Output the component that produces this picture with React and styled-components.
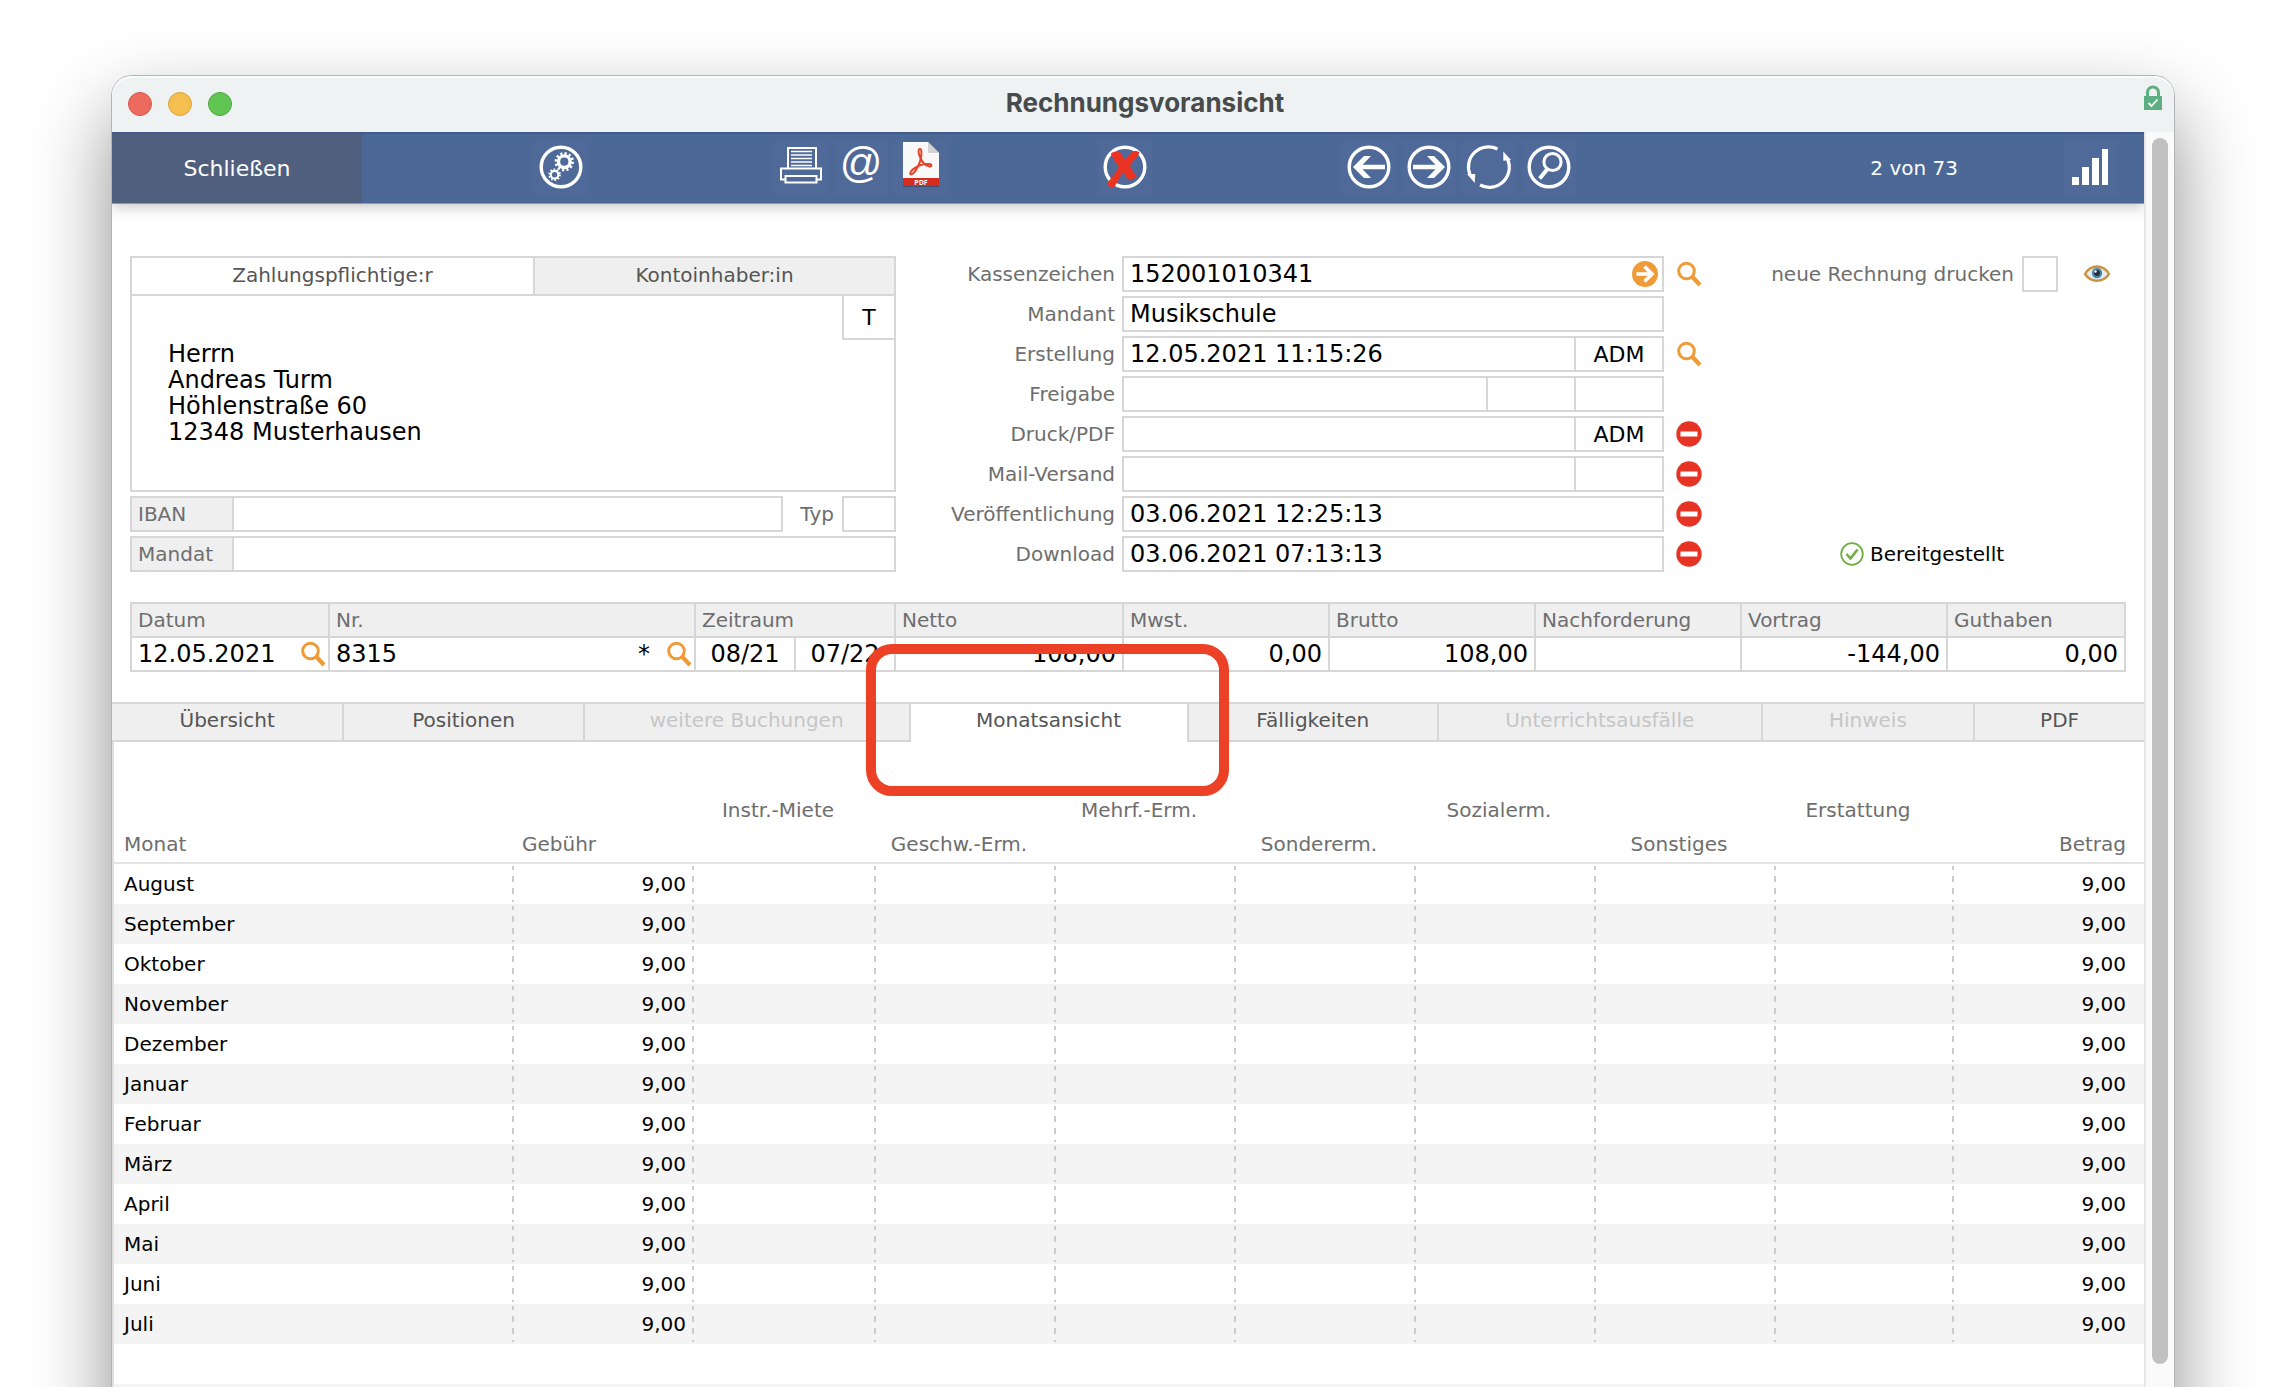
import React from 'react';
import styled, { createGlobalStyle, css } from 'styled-components';

const line = '#d6d6d6';
const orange = '#ef9c38';

const GlobalStyle = createGlobalStyle`
  * {
    box-sizing: border-box;
  }
  body {
    margin: 0;
    background: #fff;
    font-family: 'DejaVu Sans', Verdana, sans-serif;
    font-size: 20px;
    color: #000;
  }
  button, input, textarea {
    margin: 0;
    padding: 0;
    border: 0;
    border-radius: 0;
    background: none;
    font: inherit;
    color: inherit;
    outline: none;
  }
  svg {
    display: block;
    overflow: visible;
  }
`;

const Page = styled.div`
  height: 100vh;
  padding: 76px 112px 0;
  overflow: hidden;
`;

const Window = styled.main`
  display: flex;
  flex-direction: column;
  height: 100vh;
  border-radius: 20px 20px 0 0;
  background: #fff;
  box-shadow: 0 0 0 1px #b4b4b4, 0 36px 80px rgba(0, 0, 0, 0.45);
`;

const TitleBar = styled.header`
  display: grid;
  grid-template-columns: 1fr auto 1fr;
  align-items: center;
  height: 56px;
  flex: none;
  padding: 0 12px 0 16px;
  border-radius: 20px 20px 0 0;
  background: #eef2f3;
  box-shadow: inset 0 2px 0 #fafbfb;
`;

const Lights = styled.div`
  display: flex;
  gap: 16px;
`;

const Light = styled.button`
  width: 24px;
  height: 24px;
  border: 1px solid ${props => props.$edge};
  border-radius: 50%;
  background: ${props => props.$fill};
`;

const Title = styled.h1`
  margin: 0;
  padding-bottom: 2px;
  font: 700 26px/32px Inter, sans-serif;
  color: #484b4b;
`;

const LockSlot = styled.div`
  align-self: start;
  justify-self: end;
  padding-top: 9px;
`;

const Frame = styled.div`
  display: flex;
  flex: 1;
  min-height: 0;
`;

const Content = styled.div`
  flex: 1;
  min-width: 0;
  overflow: hidden;
`;

const ScrollTrack = styled.div`
  display: flex;
  flex: none;
  width: 30px;
  padding: 6px 6px 99px;
  border-left: 2px solid #e6e6e6;
  background: #fafafa;
`;

const ScrollThumb = styled.div`
  width: 16px;
  border-radius: 8px;
  background: #c1c1c1;
`;

const Toolbar = styled.nav`
  display: grid;
  grid-template-columns: 250fr 398fr 202fr 326fr 342fr 328fr 160fr;
  align-items: center;
  height: 72px;
  padding-right: 26px;
  border-top: 2px solid #435b87;
  border-bottom: 1px solid #8797b8;
  background: #4c6897;
  box-shadow: 0 2px 14px rgba(0, 0, 0, 0.25);
  color: #fff;
`;

const CloseButton = styled.button`
  align-self: stretch;
  background: #4f5f7d;
  font-size: 22px;
`;

const ToolGroup = styled.div`
  display: flex;
  justify-content: ${props => props.$align || 'center'};
  gap: 6px;
  padding-bottom: 2px;
`;

const ToolButton = styled.button`
  width: 54px;
  height: 54px;
  background: rgba(255, 255, 255, 0.02);
`;

const Form = styled.form`
  display: grid;
  grid-template-columns: 766fr 810fr 420fr;
  padding: 52px 18px 0;
`;

const Payer = styled.section`
  display: flex;
  flex-direction: column;
  gap: 4px;
`;

const AddressBox = styled.div`
  height: 236px;
  border: 2px solid ${line};
`;

const AddressTabs = styled.div`
  display: grid;
  grid-template-columns: 401fr 361fr;
  height: 38px;
  border-bottom: 2px solid ${line};
`;

const AddressTab = styled.button`
  padding-bottom: 2px;
  color: #555;
  background: ${props => (props.$active ? '#fff' : '#efefef')};
  border-left: ${props => (props.$active ? 0 : `2px solid ${line}`)};
`;

const AddressBody = styled.div`
  display: flex;
  align-items: flex-start;
`;

const Address = styled.textarea`
  flex: 1;
  height: 180px;
  padding: 45px 0 0 36px;
  resize: none;
  overflow: hidden;
  font-size: 24px;
  line-height: 26px;
`;

const TypeButton = styled.button`
  width: 52px;
  height: 44px;
  border: solid ${line};
  border-width: 0 0 2px 2px;
  font-size: 22px;
`;

const BankRow = styled.div`
  display: flex;
  height: 36px;
`;

const BankLabel = styled.label`
  display: flex;
  align-items: center;
  width: 104px;
  padding-left: 6px;
  border: 2px solid ${line};
  background: #efefef;
  color: #6e6e6e;
`;

const BankInput = styled.input`
  flex: 1;
  min-width: 0;
  border: 2px solid ${line};
  border-left: 0;
`;

const TypLabel = styled.label`
  display: flex;
  align-items: center;
  padding: 0 8px 0 17px;
  color: #6e6e6e;
`;

const TypInput = styled.input`
  width: 54px;
  border: 2px solid ${line};
`;

const Fields = styled.section`
  display: flex;
  flex-direction: column;
  gap: 4px;
`;

const FieldRow = styled.div`
  display: grid;
  grid-template-columns: 226fr 542fr 42px;
  align-items: center;
  height: 36px;
`;

const FieldLabel = styled.label`
  padding-right: 7px;
  text-align: right;
  color: #6e6e6e;
`;

const FieldBox = styled.div`
  display: flex;
  align-items: center;
  height: 36px;
  border: 2px solid ${line};
`;

const FieldInput = styled.input`
  height: 32px;
  ${props =>
    props.$small
      ? css`
          flex: none;
          width: 88px;
          border-left: 2px solid ${line};
          font-size: 22px;
          text-align: center;
        `
      : css`
          flex: 1;
          min-width: 0;
          padding-left: 6px;
          font-size: 24px;
        `}
`;

const IconButton = styled.button`
  flex: none;
  width: 26px;
  height: 26px;
  margin-right: ${props => (props.$inset ? '4px' : 0)};
`;

const FieldAction = styled.div`
  display: flex;
  padding-left: 12px;
`;

const Status = styled.section`
  display: flex;
  flex-direction: column;
  justify-content: space-between;
`;

const PrintOption = styled.div`
  display: flex;
  align-items: center;
  justify-content: flex-end;
  height: 36px;
  padding-right: 16px;
  color: #6e6e6e;
`;

const Checkbox = styled.input`
  appearance: none;
  width: 36px;
  height: 36px;
  margin: 0 26px 0 8px;
  border: 2px solid ${line};
`;

const Provided = styled.div`
  display: flex;
  align-items: center;
  gap: 6px;
  height: 36px;
  padding-left: 134px;
`;

const SummaryWrap = styled.div`
  padding: 30px 18px;
`;

const Summary = styled.table`
  width: 100%;
  table-layout: fixed;
  border-collapse: collapse;
  th, td {
    height: 34px;
    padding: 0 6px;
    border: 2px solid ${line};
    line-height: 30px;
  }
  th {
    background: #efefef;
    color: #6e6e6e;
    font-weight: 400;
    text-align: left;
  }
  td {
    font-size: 24px;
    white-space: nowrap;
  }
`;

const Col = styled.col`
  width: ${props => props.$share}%;
`;

const Amount = styled.td`
  text-align: ${props => props.$align || 'right'};
`;

const WithIcon = styled.div`
  display: flex;
  align-items: center;
  justify-content: space-between;
  margin-right: -4px;
`;

const Spring = styled.span`
  flex: 1;
  padding-right: 16px;
  text-align: right;
`;

const Tabs = styled.div`
  display: flex;
  height: 40px;
`;

const Tab = styled.button`
  position: relative;
  flex: ${props => props.$grow} 1 0;
  min-width: 0;
  padding-bottom: 4px;
  border: solid ${line};
  border-width: 2px 2px 2px 0;
  background: #efefef;
  color: #555;
  white-space: nowrap;
  &:disabled {
    color: #c6c6c6;
  }
  &:last-child {
    border-right: 0;
  }
  ${props =>
    props.$active &&
    css`
      border-width: 2px 0 0;
      padding-bottom: 6px;
      background: #fff;
      & + button {
        border-left-width: 2px;
      }
    `}
`;

/* highlight drawn over the active tab and the rows around it */
const Marker = styled.span`
  position: absolute;
  z-index: 2;
  inset: -60px -42px -54px -45px;
  border: 10px solid #ec4126;
  border-radius: 26px;
  pointer-events: none;
`;

const Months = styled.table`
  width: 100%;
  table-layout: fixed;
  border-spacing: 0;
  border-left: 2px solid #e0e0e0;
`;

const HeadCell = styled.th`
  height: 122px;
  padding: ${props => props.$pad || '51px 14px 1px 0'};
  border-bottom: 2px solid #e4e4e4;
  color: #6e6e6e;
  font-weight: 400;
  line-height: 34px;
  white-space: nowrap;
  text-align: ${props => props.$align || 'center'};
  vertical-align: ${props => (props.$upper ? 'top' : 'bottom')};
`;

const MonthRow = styled.tr`
  height: 40px;
  &:nth-child(even) {
    background: #f4f4f4;
  }
`;

const MonthCell = styled.td`
  padding: 0 8px 0 10px;
  text-align: ${props => props.$align || 'left'};
  ${props =>
    props.$dashed &&
    css`
      background: linear-gradient(
          transparent 2px, #ccc 2px, #ccc 6px,
          transparent 6px, transparent 12px, #ccc 12px, #ccc 18px,
          transparent 18px, transparent 24px, #ccc 24px, #ccc 30px,
          transparent 30px, transparent 36px, #ccc 36px, #ccc 38px,
          transparent 38px
        ) right / 2px 40px no-repeat;
    `}
  &:last-child {
    padding-right: 18px;
  }
`;

const Ring = () => (
  <circle cx="27" cy="26" r="19.8" fill="none" stroke="#fff" strokeWidth="3.4" />
);

const ToolIcon = ({ children }) => (
  <svg width="54" height="54" viewBox="0 0 54 54">
    {children}
  </svg>
);

const GearsIcon = () => (
  <ToolIcon>
    <Ring />
    <g fill="none" stroke="#fff">
      <circle cx="30.3" cy="20.7" r="5.8" strokeWidth="3.4" />
      <circle cx="30.3" cy="20.7" r="8.2" strokeWidth="3" strokeDasharray="2.2 2.09" />
      <circle cx="20.6" cy="33.7" r="3.8" strokeWidth="2.2" />
      <circle cx="20.6" cy="33.7" r="5.3" strokeWidth="2" strokeDasharray="1.6 1.73" />
    </g>
  </ToolIcon>
);

const PrinterIcon = () => (
  <ToolIcon>
    <g fill="none" stroke="#fff" strokeWidth="2">
      <path d="M14 27V7h28v20" />
      <path d="M17 10.5h21M17 14h21M17 17.5h21M17 21h21M17 24.5h21" strokeWidth="1.6" />
      <path d="M12 38.5H7v-11h40v11h-5" />
      <path d="M11.5 35h31v6.500h-31z" />
    </g>
  </ToolIcon>
);

const MailIcon = () => (
  <ToolIcon>
    <text x="27" y="36" fill="#fff" fontFamily="Liberation Sans, Arial, sans-serif" fontSize="42" textAnchor="middle">
      @
    </text>
  </ToolIcon>
);

const PdfIcon = () => (
  <ToolIcon>
    <path d="M9 2h25l11 11v33H9z" fill="#3d5173" />
    <path d="M9 1h25l11 11v33H9z" fill="#f8f8f8" />
    <path d="M34 1v11h11z" fill="#d2d2d2" />
    <path
      d="M26 8c-2.300 0-1.600 5 .4 9 2 4.200 5.200 7.600 8.600 8.400 3 .5 3.200-2 .2-2.300-5-.5-11.500 1.600-16 5-3.400 2.700-4 6-1.400 5 3.600-1.400 8.600-11 9.400-17.500.5-4.300.3-7.600-1.200-7.600z"
      fill="none"
      stroke="#e2442c"
      strokeWidth="2"
    />
    <path d="M9 37h36v8H9z" fill="#d62c20" />
    <text x="27" y="43.5" fill="#fff" fontFamily="Open Sans, sans-serif" fontWeight="700" fontSize="7" textAnchor="middle">
      PDF
    </text>
  </ToolIcon>
);

const CancelIcon = () => (
  <ToolIcon>
    <Ring />
    <path
      d="M10 41c5-6 8-10 11-15-3-4-6-8-8-13 0-2 7-3 9-2 2 3 4 6 5 8 3-4 5-7 9-9 3 0 6 0 5 3-3 4-7 8-9 12 2 4 4 7 7 10-1 2-6 4-8 4-2-2-4-5-6-8-3 5-5 9-8 14-2 2-8 3-7-4z"
      fill="#ea3323"
    />
  </ToolIcon>
);

const ArrowIcon = ({ forward }) => (
  <ToolIcon>
    <Ring />
    <path
      d="M11 26l11-11h7l-8.500 8.700H43v4.600H20.500L29 37h-7z"
      fill="#fff"
      transform={forward ? 'rotate(180 27 26)' : undefined}
    />
  </ToolIcon>
);

const ReloadIcon = () => (
  <ToolIcon>
    <g fill="none" stroke="#fff" strokeWidth="3.2">
      <path d="M35.5 8A20 20 0 0 0 8 33.5" />
      <path d="M18 44a20 20 0 0 0 27.500-26" />
    </g>
    <path d="M5 33l7.700 9 .6-9zM41.300 10.500l7.700 8.500-7.700.7z" fill="#fff" />
  </ToolIcon>
);

const FindIcon = () => (
  <ToolIcon>
    <Ring />
    <g fill="none" stroke="#fff">
      <circle cx="30.5" cy="21" r="8.6" strokeWidth="3" />
      <path d="M25.5 28l-7.800 9.500" strokeWidth="4" />
    </g>
  </ToolIcon>
);

const SignalIcon = () => (
  <ToolIcon>
    <path d="M8 36h7v8H8zM18 26h7v18h-7zM28 17h7v27h-7zM38 8h6v36h-6z" fill="#fff" />
  </ToolIcon>
);

const Magnifier = () => (
  <svg width="26" height="26" viewBox="0 0 26 26">
    <g fill="none" stroke={orange}>
      <circle cx="10.5" cy="10" r="7.8" strokeWidth="3" />
      <path d="M16 15.5l8 8.500" strokeWidth="4.2" />
    </g>
  </svg>
);

const GoIcon = () => (
  <svg width="26" height="26" viewBox="0 0 26 26">
    <circle cx="13" cy="13" r="13" fill={orange} />
    <path d="M4.500 13H19M12.500 5.500L20 13l-7.500 7.500" fill="none" stroke="#fff" strokeWidth="3.6" />
  </svg>
);

const MinusIcon = () => (
  <svg width="26" height="26" viewBox="0 0 26 26">
    <circle cx="13" cy="13" r="12.7" fill="#e63323" />
    <path d="M4.500 10.500h17v5h-17z" fill="#fff" />
  </svg>
);

const CheckIcon = () => (
  <svg width="24" height="24" viewBox="0 0 24 24" fill="none" stroke="#6fae3f">
    <circle cx="12" cy="12" r="10.8" strokeWidth="1.8" />
    <path d="M6.500 12l4 4.500 7-9" strokeWidth="2.6" />
  </svg>
);

const EyeIcon = () => (
  <svg width="26" height="26" viewBox="0 0 26 26">
    <path d="M1 13C7 3 19 3 25 13c-6 9-18 9-24 0z" fill="#e4eef5" stroke="#cb9440" strokeWidth="2.4" />
    <circle cx="13" cy="12" r="5.2" fill="#4a84ab" />
    <circle cx="13" cy="12" r="3" fill="#2a2f3a" />
    <circle cx="11.5" cy="10.5" r="1.2" fill="#fff" />
  </svg>
);

const LockIcon = () => (
  <svg width="18" height="25" viewBox="0 0 18 25">
    <path d="M3.500 12V7.500a5.500 5.500 0 0 1 11 0V12" fill="none" stroke="#5dae80" strokeWidth="3" />
    <path d="M0 11h18v14H0z" fill="#5dae80" />
    <path d="M4.500 18l3 3 6-6.500" fill="none" stroke="#fff" strokeWidth="1.8" />
  </svg>
);

const fields = [
  { id: 'kassenzeichen', label: 'Kassenzeichen', value: '152001010341', go: true, action: 'search' },
  { id: 'mandant', label: 'Mandant', value: 'Musikschule' },
  { id: 'erstellung', label: 'Erstellung', value: '12.05.2021 11:15:26', extra: ['ADM'], action: 'search' },
  { id: 'freigabe', label: 'Freigabe', value: '', extra: ['', ''] },
  { id: 'druck', label: 'Druck/PDF', value: '', extra: ['ADM'], action: 'remove' },
  { id: 'mail', label: 'Mail-Versand', value: '', extra: [''], action: 'remove' },
  { id: 'veroeffentlichung', label: 'Veröffentlichung', value: '03.06.2021 12:25:13', action: 'remove' },
  { id: 'download', label: 'Download', value: '03.06.2021 07:13:13', action: 'remove' }
];

const summaryCols = [198, 366, 100, 100, 228, 206, 206, 206, 206, 178];
const monthCols = [400, 180, 182, 180, 180, 180, 180, 180, 178, 190];

const tabs = [
  { label: 'Übersicht', grow: 232 },
  { label: 'Positionen', grow: 240 },
  { label: 'weitere Buchungen', grow: 326, disabled: true },
  { label: 'Monatsansicht', grow: 278, active: true },
  { label: 'Fälligkeiten', grow: 250 },
  { label: 'Unterrichtsausfälle', grow: 324, disabled: true },
  { label: 'Hinweis', grow: 212, disabled: true },
  { label: 'PDF', grow: 170 }
];

const reductions = [
  'Instr.-Miete',
  'Geschw.-Erm.',
  'Mehrf.-Erm.',
  'Sondererm.',
  'Sozialerm.',
  'Sonstiges',
  'Erstattung'
];

const months = [
  'August', 'September', 'Oktober', 'November', 'Dezember', 'Januar',
  'Februar', 'März', 'April', 'Mai', 'Juni', 'Juli'
];

const Columns = ({ widths }) => {
  const total = widths.reduce((a, b) => a + b, 0);
  return (
    <colgroup>
      {widths.map((w, i) => (
        <Col key={i} $share={(w / total) * 100} />
      ))}
    </colgroup>
  );
};

const Tool = ({ label, children }) => (
  <ToolButton type="button" aria-label={label}>
    {children}
  </ToolButton>
);

const Field = ({ id, label, value, extra = [], go, action }) => (
  <FieldRow>
    <FieldLabel htmlFor={id}>{label}</FieldLabel>
    <FieldBox>
      <FieldInput id={id} defaultValue={value} />
      {go && (
        <IconButton type="button" aria-label="Öffnen" $inset>
          <GoIcon />
        </IconButton>
      )}
      {extra.map((text, i) => (
        <FieldInput key={i} $small defaultValue={text} aria-label={`${label} Kürzel ${i + 1}`} />
      ))}
    </FieldBox>
    {action && (
      <FieldAction>
        <IconButton type="button" aria-label={action === 'search' ? 'Suchen' : 'Entfernen'}>
          {action === 'search' ? <Magnifier /> : <MinusIcon />}
        </IconButton>
      </FieldAction>
    )}
  </FieldRow>
);

const App = () => (
  <Page>
    <GlobalStyle />
    <Window>
      <TitleBar>
        <Lights>
          <Light aria-label="Fenster schließen" $fill="#ed6a5e" $edge="#d5564a" />
          <Light aria-label="Minimieren" $fill="#f5bf4f" $edge="#dba33c" />
          <Light aria-label="Vergrößern" $fill="#61c554" $edge="#4fa73f" />
        </Lights>
        <Title>Rechnungsvoransicht</Title>
        <LockSlot>
          <LockIcon />
        </LockSlot>
      </TitleBar>
      <Frame>
        <Content>
          <Toolbar>
            <CloseButton type="button">Schließen</CloseButton>
            <ToolGroup>
              <Tool label="Einstellungen"><GearsIcon /></Tool>
            </ToolGroup>
            <ToolGroup>
              <Tool label="Drucken"><PrinterIcon /></Tool>
              <Tool label="E-Mail"><MailIcon /></Tool>
              <Tool label="PDF"><PdfIcon /></Tool>
            </ToolGroup>
            <ToolGroup>
              <Tool label="Stornieren"><CancelIcon /></Tool>
            </ToolGroup>
            <ToolGroup>
              <Tool label="Zurück"><ArrowIcon /></Tool>
              <Tool label="Weiter"><ArrowIcon forward /></Tool>
              <Tool label="Aktualisieren"><ReloadIcon /></Tool>
              <Tool label="Suchen"><FindIcon /></Tool>
            </ToolGroup>
            <ToolGroup $align="flex-end">2 von 73</ToolGroup>
            <ToolGroup $align="flex-end">
              <Tool label="Verbindung"><SignalIcon /></Tool>
            </ToolGroup>
          </Toolbar>

          <Form>
            <Payer>
              <AddressBox>
                <AddressTabs>
                  <AddressTab type="button" $active>Zahlungspflichtige:r</AddressTab>
                  <AddressTab type="button">Kontoinhaber:in</AddressTab>
                </AddressTabs>
                <AddressBody>
                  <Address
                    aria-label="Anschrift"
                    defaultValue={'Herrn\nAndreas Turm\nHöhlenstraße 60\n12348 Musterhausen'}
                  />
                  <TypeButton type="button">T</TypeButton>
                </AddressBody>
              </AddressBox>
              <BankRow>
                <BankLabel htmlFor="iban">IBAN</BankLabel>
                <BankInput id="iban" />
                <TypLabel htmlFor="typ">Typ</TypLabel>
                <TypInput id="typ" />
              </BankRow>
              <BankRow>
                <BankLabel htmlFor="mandat">Mandat</BankLabel>
                <BankInput id="mandat" />
              </BankRow>
            </Payer>
            <Fields>
              {fields.map(field => (
                <Field key={field.id} {...field} />
              ))}
            </Fields>
            <Status>
              <PrintOption>
                <label htmlFor="drucken">neue Rechnung drucken</label>
                <Checkbox id="drucken" type="checkbox" />
                <IconButton type="button" aria-label="Ansehen"><EyeIcon /></IconButton>
              </PrintOption>
              <Provided>
                <CheckIcon />
                Bereitgestellt
              </Provided>
            </Status>
          </Form>

          <SummaryWrap>
            <Summary>
              <Columns widths={summaryCols} />
              <thead>
                <tr>
                  <th>Datum</th>
                  <th>Nr.</th>
                  <th colSpan={2}>Zeitraum</th>
                  <th>Netto</th>
                  <th>Mwst.</th>
                  <th>Brutto</th>
                  <th>Nachforderung</th>
                  <th>Vortrag</th>
                  <th>Guthaben</th>
                </tr>
              </thead>
              <tbody>
                <tr>
                  <td>
                    <WithIcon>
                      12.05.2021
                      <IconButton type="button" aria-label="Datum suchen"><Magnifier /></IconButton>
                    </WithIcon>
                  </td>
                  <td>
                    <WithIcon>
                      8315
                      <Spring>*</Spring>
                      <IconButton type="button" aria-label="Nummer suchen"><Magnifier /></IconButton>
                    </WithIcon>
                  </td>
                  <Amount $align="center">08/21</Amount>
                  <Amount $align="center">07/22</Amount>
                  <Amount>108,00</Amount>
                  <Amount>0,00</Amount>
                  <Amount>108,00</Amount>
                  <Amount />
                  <Amount>-144,00</Amount>
                  <Amount>0,00</Amount>
                </tr>
              </tbody>
            </Summary>
          </SummaryWrap>

          <Tabs>
            {tabs.map(tab => (
              <Tab key={tab.label} type="button" $grow={tab.grow} $active={tab.active} disabled={tab.disabled}>
                {tab.label}
                {tab.active && <Marker />}
              </Tab>
            ))}
          </Tabs>

          <Months>
            <Columns widths={monthCols} />
            <thead>
              <tr>
                <HeadCell $align="left" $pad="0 0 1px 10px">Monat</HeadCell>
                <HeadCell $align="left" $pad="0 0 1px 8px">Gebühr</HeadCell>
                {reductions.map((name, i) => (
                  <HeadCell key={name} $upper={i % 2 === 0}>{name}</HeadCell>
                ))}
                <HeadCell $align="right" $pad="0 18px 1px 0">Betrag</HeadCell>
              </tr>
            </thead>
            <tbody>
              {months.map(month => (
                <MonthRow key={month}>
                  <MonthCell $dashed>{month}</MonthCell>
                  <MonthCell $dashed $align="right">9,00</MonthCell>
                  {reductions.map(name => (
                    <MonthCell key={name} $dashed />
                  ))}
                  <MonthCell $align="right">9,00</MonthCell>
                </MonthRow>
              ))}
              <MonthRow><td colSpan={10} /></MonthRow>
              <MonthRow><td colSpan={10} /></MonthRow>
            </tbody>
          </Months>
        </Content>
        <ScrollTrack>
          <ScrollThumb />
        </ScrollTrack>
      </Frame>
    </Window>
  </Page>
);

export default App;
